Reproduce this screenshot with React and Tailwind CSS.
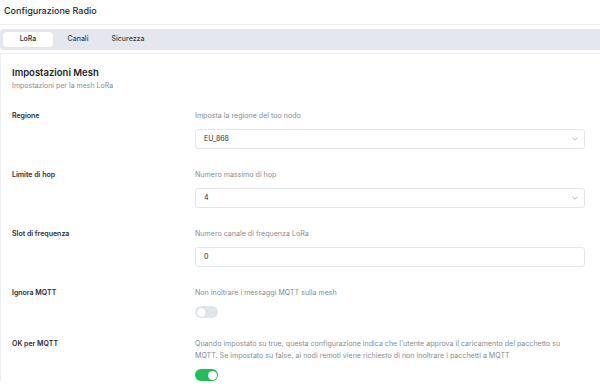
import React from "react";

function Chevron() {
  return (
    <svg width="6" height="4" viewBox="0 0 10 6" fill="none" stroke="#a4a9b1" strokeWidth="1.4" strokeLinecap="round" strokeLinejoin="round">
      <path d="M1 1l4 4 4-4" />
    </svg>
  );
}

function Toggle({ on }) {
  return (
    <div className={on ? "w-[23px] h-[12px] rounded-full bg-[#1fbf5a] flex items-center justify-end px-[1.5px]" : "w-[23px] h-[12px] rounded-full bg-[#e2e5ea] flex items-center justify-start px-[1.5px]"}>
      <div className="w-[9px] h-[9px] rounded-full bg-white shadow-[0_0_1px_rgba(0,0,0,0.2)]" />
    </div>
  );
}

function Row({ label, desc, children }) {
  return (
    <div className="grid grid-cols-[183px_390px]">
      <div className="text-[7px] leading-[12px] font-semibold text-[#2a2d33]">{label}</div>
      <div className="flex flex-col gap-[7px]">
        <div className="text-[7.1px] leading-[12px] text-[#878c94]">{desc}</div>
        {children}
      </div>
    </div>
  );
}

function Select({ value }) {
  return (
    <div className="h-[20px] border border-[#e3e6eb] rounded-[3px] flex items-center justify-between pl-[8px] pr-[6px] bg-white">
      <span className="text-[7px] text-[#2a2d33]">{value}</span>
      <Chevron />
    </div>
  );
}

export default function App() {
  return (
    <div className="w-[600px] h-[390px] overflow-hidden bg-white" style={{ fontFamily: "Inter, 'Noto Sans', sans-serif" }}>
      <div className="h-[25px] border-b border-[#eceef2] pl-[4px] pt-[6px]">
        <div className="text-[9px] leading-[10px] font-medium text-[#25282d]">Configurazione Radio</div>
      </div>
      <div className="pt-[4px]">
        <div className="h-[21px] w-[620px] bg-[#e4e7ee] rounded-l-[4px] flex items-center px-[3px]">
          <div className="w-[50px] h-[15px] bg-white rounded-[3px] flex items-center justify-center text-[7px] font-medium text-[#25282d] shadow-[0_0_1px_rgba(0,0,0,0.1)]">LoRa</div>
          <div className="w-[50px] h-[15px] flex items-center justify-center text-[7px] font-medium text-[#3a3d44]">Canali</div>
          <div className="w-[50px] h-[15px] flex items-center justify-center text-[7px] font-medium text-[#3a3d44]">Sicurezza</div>
        </div>
      </div>
      <div className="mt-[3px] border-t border-l border-[#eceef2] pt-[12px] pl-[11px]">
        <div className="text-[9.5px] leading-[14px] font-semibold text-[#1f2227]">Impostazioni Mesh</div>
        <div className="mt-[1px] text-[7px] leading-[10px] text-[#878c94]">Impostazioni per la mesh LoRa</div>
        <div className="mt-[19px] flex flex-col gap-[20px]">
          <Row label="Regione" desc="Imposta la regione del tuo nodo">
            <Select value="EU_868" />
          </Row>
          <Row label="Limite di hop" desc="Numero massimo di hop">
            <Select value="4" />
          </Row>
          <Row label="Slot di frequenza" desc="Numero canale di frequenza LoRa">
            <div className="h-[20px] border border-[#e3e6eb] rounded-[3px] flex items-center pl-[8px] bg-white">
              <span className="text-[7px] text-[#2a2d33]">0</span>
            </div>
          </Row>
          <Row label="Ignora MQTT" desc="Non inoltrare i messaggi MQTT sulla mesh">
            <Toggle on={false} />
          </Row>
          <Row
            label="OK per MQTT"
            desc={<>Quando impostato su true, questa configurazione indica che l'utente approva il caricamento del pacchetto su<br />MQTT. Se impostato su false, ai nodi remoti viene richiesto di non inoltrare i pacchetti a MQTT</>}
          >
            <Toggle on={true} />
          </Row>
        </div>
      </div>
    </div>
  );
}
